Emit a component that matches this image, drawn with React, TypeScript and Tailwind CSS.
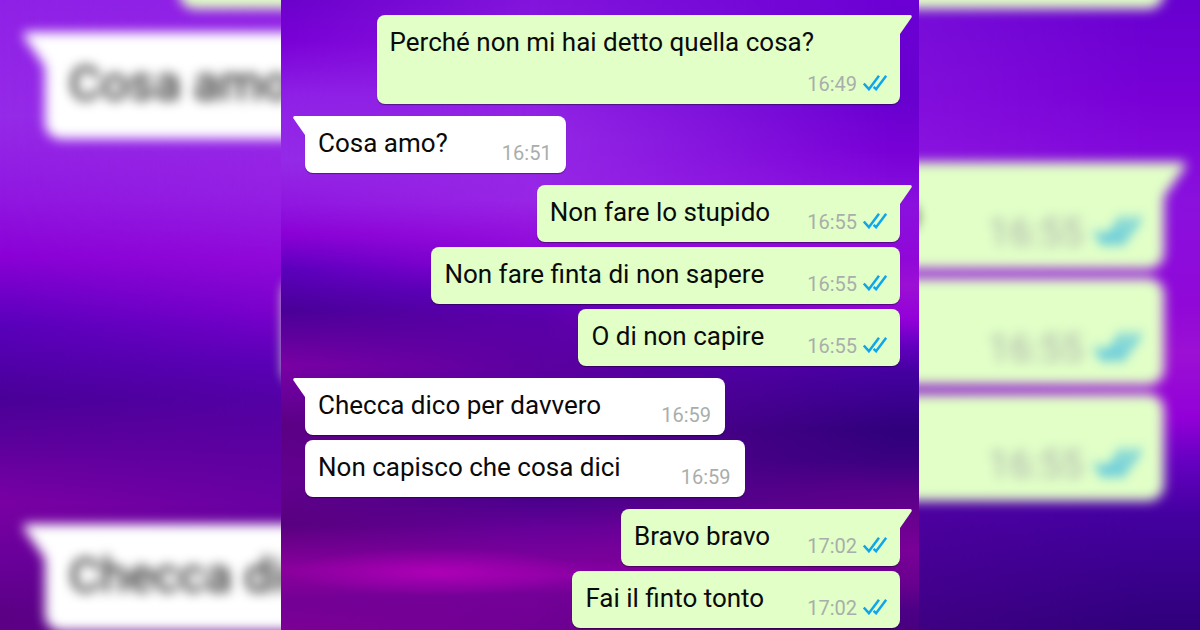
import React from "react";

type Message = {
  text: string;
  time: string;
  mine?: boolean;
  stacked?: boolean;
  loose?: boolean;
};

const groups: Message[][] = [
  [{ text: "Perché non mi hai detto quella cosa?", time: "16:49", mine: true, stacked: true }],
  [{ text: "Cosa amo?", time: "16:51" }],
  [
    { text: "Non fare lo stupido", time: "16:55", mine: true },
    { text: "Non fare finta di non sapere", time: "16:55", mine: true, loose: true },
    { text: "O di non capire", time: "16:55", mine: true, loose: true },
  ],
  [
    { text: "Checca dico per davvero", time: "16:59", loose: true },
    { text: "Non capisco che cosa dici", time: "16:59", loose: true },
  ],
  [
    { text: "Bravo bravo", time: "17:02", mine: true },
    { text: "Fai il finto tonto", time: "17:02", mine: true, loose: true },
  ],
];

const regular = {
  list: "gap-3 pt-[15px] pb-[2px] pl-6 pr-[19px]",
  group: "gap-[5px]",
  bubble: "rounded-lg pt-[11px] pb-2 pl-[13px] shadow-[0_1px_1px_rgba(0,0,0,0.4)]",
  text: "text-[26px] leading-8",
  inline: "pb-1.5",
  stacked: "pb-[14px] pr-[73px]",
  time: "text-[20px] leading-6 gap-1.5",
  padMine: "pr-[13px]",
  padTheirs: "pr-[14px]",
  gapMine: "ml-[37px]",
  gapMineLoose: "ml-[43px]",
  gapTheirs: "ml-[54px]",
  gapTheirsLoose: "ml-[60px]",
  ticks: "w-6 h-4 mb-[5px]",
  tail: "w-[13px] h-5",
  tailMine: "-right-3",
  tailTheirs: "-left-3",
};

const large: typeof regular = {
  list: "gap-[23px] pl-[45px] pr-9",
  group: "gap-[9px]",
  bubble: "rounded-2xl pt-[22px] pb-[13px] pl-6",
  text: "text-[49px] leading-[60px]",
  inline: "pb-3",
  stacked: "pb-[25px] pr-[137px]",
  time: "text-[38px] leading-[46px] gap-3",
  padMine: "pr-6",
  padTheirs: "pr-[27px]",
  gapMine: "ml-[69px]",
  gapMineLoose: "ml-[79px]",
  gapTheirs: "ml-[101px]",
  gapTheirsLoose: "ml-[113px]",
  ticks: "w-[45px] h-[30px] mb-[10px]",
  tail: "w-[24px] h-[37px]",
  tailMine: "-right-[22px]",
  tailTheirs: "-left-[22px]",
};

function Ticks({ className }: { className: string }) {
  return (
    <svg viewBox="0 0 24 16" className={className} fill="none" stroke="#0fa5ec" strokeWidth="2.5" aria-hidden="true">
      <path d="M0.8 8.6 5.9 14.2 16 0.8" />
      <path d="M10.6 11.8 13.1 14.2 23.2 0.8" />
    </svg>
  );
}

function Tail({ mine, className }: { mine?: boolean; className: string }) {
  return (
    <svg viewBox="0 0 13 20" className={className} aria-hidden="true">
      {mine ? (
        <path d="M0 0H11.4Q13.4 0.4 12.5 2.6L1 19H0Z" fill="#e1ffc7" />
      ) : (
        <path d="M13 0H1.6Q-0.4 0.4 0.5 2.6L12 19H13Z" fill="#fff" />
      )}
    </svg>
  );
}

function Bubble({ message, first, size }: { message: Message; first: boolean; size: typeof regular }) {
  const { text, time, mine, stacked, loose } = message;
  const gap = mine ? (loose ? size.gapMineLoose : size.gapMine) : loose ? size.gapTheirsLoose : size.gapTheirs;
  return (
    <li
      className={`relative flex ${size.bubble} ${mine ? `self-end bg-[#e1ffc7] ${size.padMine}` : `self-start bg-white ${size.padTheirs}`} ${
        stacked ? "flex-col" : "items-end"
      } ${first ? (mine ? "rounded-tr-none" : "rounded-tl-none") : ""}`}
    >
      {first && <Tail mine={mine} className={`absolute top-0 ${size.tail} ${mine ? size.tailMine : size.tailTheirs}`} />}
      <p className={`whitespace-nowrap text-[#0a0a0a] ${size.text} ${stacked ? size.stacked : size.inline}`}>{text}</p>
      <div className={`flex items-end whitespace-nowrap text-[#a9aeab] ${size.time} ${stacked ? "self-end" : gap}`}>
        <time>{time}</time>
        {mine && <Ticks className={size.ticks} />}
      </div>
    </li>
  );
}

function Conversation({ size }: { size: typeof regular }) {
  return (
    <div className={`relative flex flex-col ${size.list}`}>
      {groups.map((group, g) => (
        <ul key={g} className={`flex flex-col ${size.group}`}>
          {group.map((message, i) => (
            <Bubble key={message.text} message={message} first={i === 0} size={size} />
          ))}
        </ul>
      ))}
    </div>
  );
}

const skyLeft: [number, string][] = [
  [0, "#6c00cc"], [40, "#7a00d6"], [95, "#8f20e6"], [160, "#952ae8"], [205, "#9016e0"], [235, "#8a00d6"],
  [270, "#5a00bc"], [310, "#4a0098"], [335, "#5e009c"], [365, "#7a00a4"], [395, "#6a009a"], [425, "#5c0086"],
  [480, "#640090"], [525, "#580080"], [570, "#8c009e"], [600, "#740096"], [630, "#7c0096"],
];
const skyMiddle: [number, string][] = [
  [0, "#8214dc"], [60, "#8c1ae2"], [140, "#9428e6"], [200, "#9826e6"], [235, "#9410dc"], [265, "#8c00d4"],
  [292, "#6000c0"], [320, "#5a00a8"], [370, "#5c00a0"], [440, "#5a0090"], [500, "#4a008c"], [530, "#68009a"],
  [560, "#7c009c"], [575, "#9000a8"], [595, "#740098"], [630, "#700094"],
];
const skyRight: [number, string][] = [
  [0, "#6c00d4"], [100, "#6800d0"], [150, "#7800d6"], [205, "#8a10de"], [260, "#9008d8"], [285, "#9c10d4"],
  [320, "#9200d8"], [345, "#6400c0"], [372, "#4400a0"], [430, "#30007c"], [460, "#3a0080"], [490, "#580088"],
  [550, "#7a0098"], [585, "#68008e"], [610, "#4c0086"], [630, "#480080"],
];

function Wallpaper({ id, viewBox }: { id: string; viewBox: string }) {
  const bands = { left: skyLeft, middle: skyMiddle, right: skyRight };
  return (
    <svg viewBox={viewBox} preserveAspectRatio="none" className="absolute inset-0 h-full w-full" aria-hidden="true">
      <defs>
        {Object.entries(bands).map(([name, stops]) => (
          <linearGradient key={name} id={`${id}-${name}`} gradientUnits="userSpaceOnUse" x1="0" y1="0" x2="0" y2="630">
            {stops.map(([y, color]) => (
              <stop key={y} offset={y / 630} stopColor={color} />
            ))}
          </linearGradient>
        ))}
        <linearGradient id={`${id}-fade-a`}>
          <stop offset="0" stopColor="#000" />
          <stop offset="0.4" stopColor="#fff" />
        </linearGradient>
        <linearGradient id={`${id}-fade-b`}>
          <stop offset="0.4" stopColor="#000" />
          <stop offset="0.96" stopColor="#fff" />
        </linearGradient>
        <mask id={`${id}-mask-a`}>
          <rect width="638" height="630" fill={`url(#${id}-fade-a)`} />
        </mask>
        <mask id={`${id}-mask-b`}>
          <rect width="638" height="630" fill={`url(#${id}-fade-b)`} />
        </mask>
        <radialGradient id={`${id}-glow`}>
          <stop offset="0" stopColor="#b400ba" stopOpacity="0.85" />
          <stop offset="0.5" stopColor="#b000b8" stopOpacity="0.4" />
          <stop offset="1" stopColor="#b000b8" stopOpacity="0" />
        </radialGradient>
      </defs>
      <rect width="638" height="630" fill={`url(#${id}-left)`} />
      <rect width="638" height="630" fill={`url(#${id}-middle)`} mask={`url(#${id}-mask-a)`} />
      <rect width="638" height="630" fill={`url(#${id}-right)`} mask={`url(#${id}-mask-b)`} />
      <ellipse cx="155" cy="572" rx="150" ry="24" fill={`url(#${id}-glow)`} />
    </svg>
  );
}

export default function App() {
  return (
    <div className="relative min-h-screen overflow-hidden bg-[#5c00a0] font-[Roboto,sans-serif]">
      <div className="absolute inset-0 overflow-hidden" aria-hidden="true">
        <Wallpaper id="backdrop" viewBox="0 98 638 335" />
        <div className="-mt-[157px] blur-[6px]">
          <Conversation size={large} />
        </div>
      </div>
      <main className="relative mx-auto min-h-screen w-full max-w-[638px] overflow-hidden">
        <Wallpaper id="chat" viewBox="0 0 638 630" />
        <Conversation size={regular} />
      </main>
    </div>
  );
}
